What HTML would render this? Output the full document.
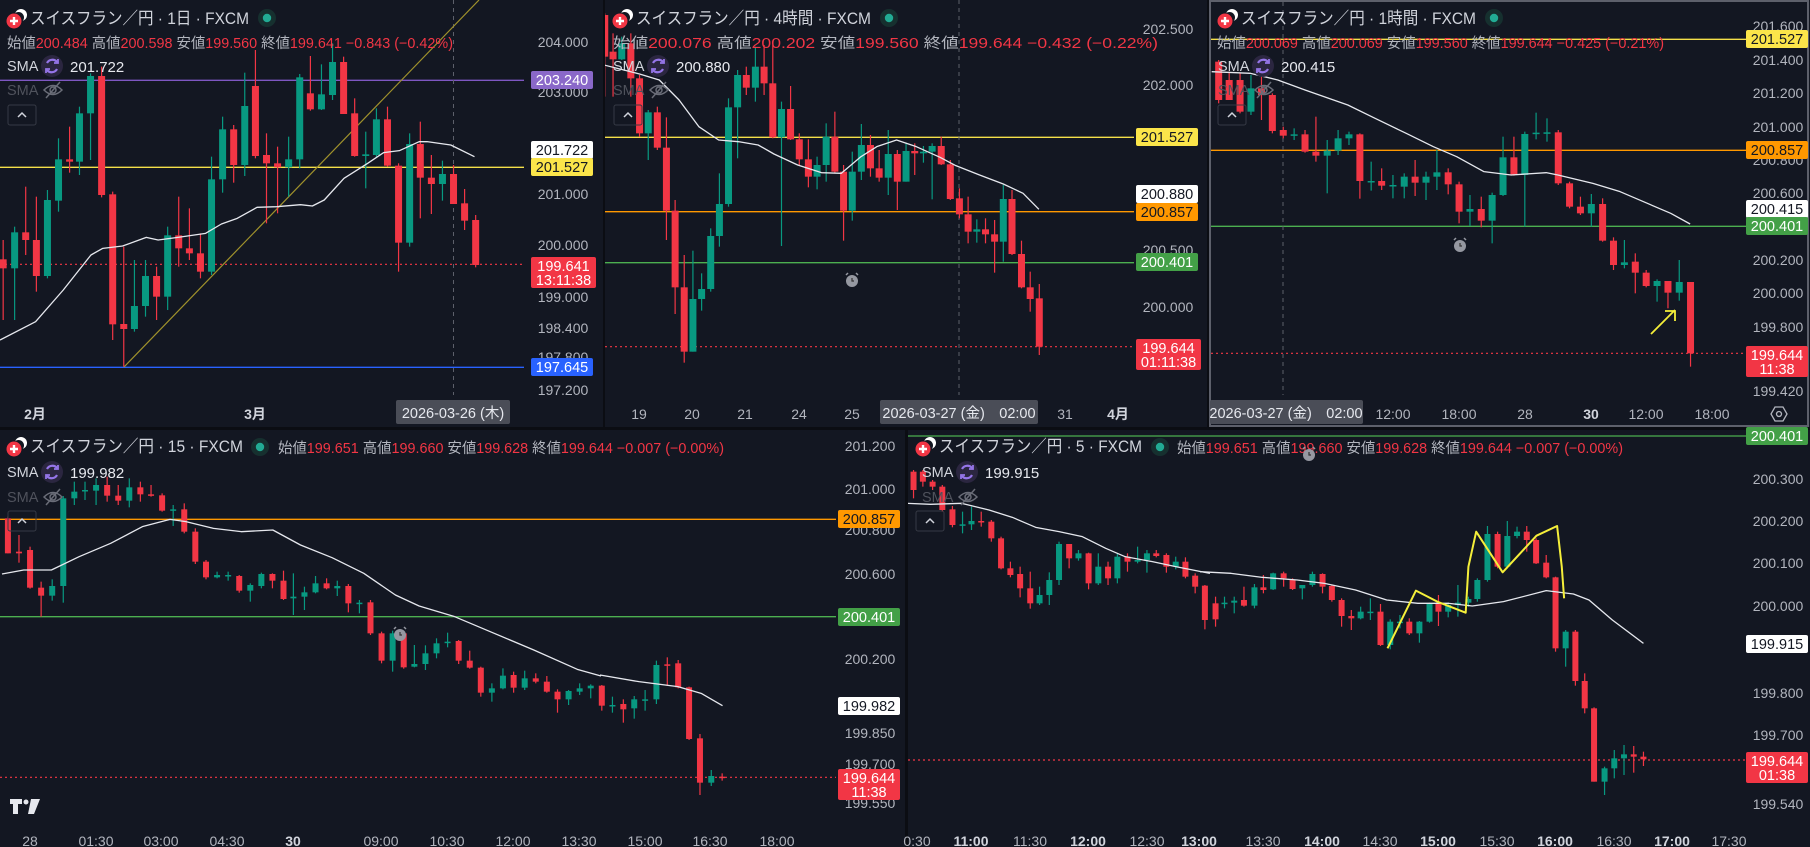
<!DOCTYPE html>
<html><head><meta charset="utf-8">
<style>
html,body{margin:0;padding:0;background:#0b0d13;width:1810px;height:847px;overflow:hidden}
svg{display:block}
text{font-family:"Liberation Sans","Noto Sans CJK JP",sans-serif}
.t{fill:#d1d4dc;font-size:17px}
.o{font-size:14.5px;fill:#b2b5be}
.r{fill:#f23645}
.ax{fill:#b2b5be;font-size:14px;text-anchor:middle}
.bd{fill:#d1d4dc;font-weight:bold}
.lb{font-size:14.5px;text-anchor:middle}
</style></head><body>
<svg id="s" xmlns="http://www.w3.org/2000/svg" width="1810" height="847" viewBox="0 0 1810 847">
<defs>
<clipPath id="c1"><rect x="0" y="0" width="524" height="395"/></clipPath>
<clipPath id="c2"><rect x="605" y="0" width="529" height="395"/></clipPath>
<clipPath id="c3"><rect x="1211" y="2" width="535" height="393"/></clipPath>
<clipPath id="c4"><rect x="0" y="430" width="836" height="398"/></clipPath>
<clipPath id="c5"><rect x="908" y="430" width="838" height="398"/></clipPath>
<g id="logo"><circle cx="7" cy="-6" r="6" fill="#fff"/><circle cx="4.5" cy="-3.5" r="5.5" fill="#131722"/><circle cx="0" cy="0" r="7.5" fill="#f23645"/><path d="M-4 0H4M0 -4V4" stroke="#fff" stroke-width="2.4"/></g>
<g id="dot"><circle r="9" fill="#16302f"/><circle r="4.2" fill="#22ab94"/></g>
<g id="smai"><circle r="11" fill="#2b2640"/><path d="M-5 -3a6 6 0 0 1 10 -1M5 3a6 6 0 0 1 -10 1" stroke="#9575e8" stroke-width="2.2" fill="none"/><path d="M6 -7v4h-4M-6 7v-4h4" stroke="#9575e8" stroke-width="1.8" fill="none"/></g>
<g id="eye"><path d="M-9 0q9 -9 18 0q-9 9 -18 0z" stroke="#6a6d78" stroke-width="1.5" fill="none"/><circle r="3" stroke="#6a6d78" stroke-width="1.5" fill="none"/><path d="M-7 8L7 -8" stroke="#6a6d78" stroke-width="1.5"/></g>
<g id="btn"><rect x="0" y="0" width="28" height="20" rx="2" fill="none" stroke="#363a45"/><path d="M10 12l4 -4l4 4" stroke="#d1d4dc" stroke-width="1.5" fill="none"/></g>
<g id="alarm"><circle r="6" fill="#9598a1"/><path d="M0 -3v3h2" stroke="#333" stroke-width="1.2" fill="none"/><path d="M-6 -6l2 -2M6 -6l-2 -2" stroke="#9598a1" stroke-width="1.5"/></g>
</defs>
<rect x="0" y="0" width="603" height="427" fill="#131722"/>
<rect x="605" y="0" width="602" height="427" fill="#131722"/>
<rect x="1209" y="0" width="601" height="427" fill="#131722"/>
<rect x="0" y="430" width="905" height="417" fill="#131722"/>
<rect x="908" y="430" width="902" height="417" fill="#131722"/>
<rect x="1210" y="1" width="598" height="425" fill="none" stroke="#5d606b" stroke-width="2"/>

<g id="g1" clip-path="url(#c1)"></g>
<g id="g2" clip-path="url(#c2)"></g>
<g id="g3" clip-path="url(#c3)"></g>
<g id="g4" clip-path="url(#c4)"></g>
<g id="g5" clip-path="url(#c5)"></g>

<use href="#logo" x="14" y="21"/>
<text class="t" x="30" y="24" textLength="219" lengthAdjust="spacingAndGlyphs">スイスフラン／円 · 1日 · FXCM</text>
<use href="#dot" x="267" y="18"/>
<text class="o" x="7" y="48" textLength="446" lengthAdjust="spacingAndGlyphs">始値<tspan class="r">200.484</tspan> 高値<tspan class="r">200.598</tspan> 安値<tspan class="r">199.560</tspan> 終値<tspan class="r">199.641 −0.843 (−0.42%)</tspan></text>
<text x="7" y="71" fill="#d1d4dc" font-size="14.5">SMA</text><use href="#smai" x="52" y="66"/><text x="70" y="72" fill="#e6e8ee" font-size="15">201.722</text>
<text x="7" y="95" fill="#4f525c" font-size="14.5">SMA</text><use href="#eye" x="53" y="90"/>
<use href="#btn" x="8" y="105"/>

<use href="#logo" x="620" y="21"/>
<text class="t" x="636" y="24" textLength="235" lengthAdjust="spacingAndGlyphs">スイスフラン／円 · 4時間 · FXCM</text>
<use href="#dot" x="889" y="18"/>
<text class="o" x="613" y="48" textLength="545" lengthAdjust="spacingAndGlyphs">始値<tspan class="r">200.076</tspan> 高値<tspan class="r">200.202</tspan> 安値<tspan class="r">199.560</tspan> 終値<tspan class="r">199.644 −0.432 (−0.22%)</tspan></text>
<text x="613" y="71" fill="#d1d4dc" font-size="14.5">SMA</text><use href="#smai" x="658" y="66"/><text x="676" y="72" fill="#e6e8ee" font-size="15">200.880</text>
<text x="613" y="95" fill="#4f525c" font-size="14.5">SMA</text><use href="#eye" x="659" y="90"/>
<use href="#btn" x="614" y="105"/>

<use href="#logo" x="1225" y="21"/>
<text class="t" x="1241" y="24" textLength="235" lengthAdjust="spacingAndGlyphs">スイスフラン／円 · 1時間 · FXCM</text>
<use href="#dot" x="1494" y="18"/>
<text class="o" x="1217" y="48" textLength="447" lengthAdjust="spacingAndGlyphs">始値<tspan class="r">200.069</tspan> 高値<tspan class="r">200.069</tspan> 安値<tspan class="r">199.560</tspan> 終値<tspan class="r">199.644 −0.425 (−0.21%)</tspan></text>
<text x="1218" y="71" fill="#d1d4dc" font-size="14.5">SMA</text><use href="#smai" x="1263" y="66"/><text x="1281" y="72" fill="#e6e8ee" font-size="15">200.415</text>
<text x="1218" y="95" fill="#4f525c" font-size="14.5">SMA</text><use href="#eye" x="1264" y="90"/>
<use href="#btn" x="1218" y="105"/>

<use href="#logo" x="14" y="449"/>
<text class="t" x="30" y="452" textLength="213" lengthAdjust="spacingAndGlyphs">スイスフラン／円 · 15 · FXCM</text>
<use href="#dot" x="260" y="447"/>
<text class="o" x="278" y="453" textLength="446" lengthAdjust="spacingAndGlyphs">始値<tspan class="r">199.651</tspan> 高値<tspan class="r">199.660</tspan> 安値<tspan class="r">199.628</tspan> 終値<tspan class="r">199.644 −0.007 (−0.00%)</tspan></text>
<text x="7" y="477" fill="#d1d4dc" font-size="14.5">SMA</text><use href="#smai" x="52" y="472"/><text x="70" y="478" fill="#e6e8ee" font-size="15">199.982</text>
<text x="7" y="502" fill="#4f525c" font-size="14.5">SMA</text><use href="#eye" x="53" y="497"/>
<use href="#btn" x="8" y="511"/>
<g fill="#e6e8ee"><path d="M10 799h12v5h-4v10h-5v-10h-3z"/><circle cx="26" cy="802" r="2.5"/><path d="M31 799h9l-6 15h-6z"/></g>

<use href="#logo" x="923" y="449"/>
<text class="t" x="939" y="452" textLength="203" lengthAdjust="spacingAndGlyphs">スイスフラン／円 · 5 · FXCM</text>
<use href="#dot" x="1160" y="447"/>
<text class="o" x="1177" y="453" textLength="446" lengthAdjust="spacingAndGlyphs">始値<tspan class="r">199.651</tspan> 高値<tspan class="r">199.660</tspan> 安値<tspan class="r">199.628</tspan> 終値<tspan class="r">199.644 −0.007 (−0.00%)</tspan></text>
<text x="922" y="477" fill="#d1d4dc" font-size="14.5">SMA</text><use href="#smai" x="967" y="472"/><text x="985" y="478" fill="#e6e8ee" font-size="15">199.915</text>
<text x="922" y="502" fill="#4f525c" font-size="14.5">SMA</text><use href="#eye" x="968" y="497"/>
<use href="#btn" x="916" y="511"/>

<use href="#alarm" x="852" y="281"/>
<use href="#alarm" x="1460" y="246"/>
<use href="#alarm" x="400" y="635"/>
<use href="#alarm" x="1309" y="455"/>
<path d="M1651 334L1675 310M1665 311h10v10" stroke="#f5ef3a" stroke-width="1.8" fill="none"/>

<g class="ax">
<text x="563" y="47">204.000</text><text x="563" y="97">203.000</text><text x="563" y="199">201.000</text><text x="563" y="250">200.000</text><text x="563" y="302">199.000</text><text x="563" y="333">198.400</text><text x="563" y="362">197.800</text><text x="563" y="395">197.200</text>
<text x="35" y="419" class="bd">2月</text><text x="255" y="419" class="bd">3月</text>
</g>
<g class="ax">
<text x="1168" y="34">202.500</text><text x="1168" y="90">202.000</text><text x="1168" y="255">200.500</text><text x="1168" y="312">200.000</text>
<text x="639" y="419">19</text><text x="692" y="419">20</text><text x="745" y="419">21</text><text x="799" y="419">24</text><text x="852" y="419">25</text><text x="1065" y="419">31</text><text x="1118" y="419" class="bd">4月</text>
</g>
<g class="ax">
<text x="1778" y="31">201.600</text><text x="1778" y="65">201.400</text><text x="1778" y="98">201.200</text><text x="1778" y="132">201.000</text><text x="1778" y="165">200.800</text><text x="1778" y="198">200.600</text><text x="1778" y="265">200.200</text><text x="1778" y="298">200.000</text><text x="1778" y="332">199.800</text><text x="1778" y="396">199.420</text>
<text x="1393" y="419">12:00</text><text x="1459" y="419">18:00</text><text x="1525" y="419">28</text><text x="1591" y="419" class="bd">30</text><text x="1646" y="419">12:00</text><text x="1712" y="419">18:00</text>
</g>
<g transform="translate(1779,414)"><path d="M-4 -7h8l4 7l-4 7h-8l-4 -7z" fill="none" stroke="#b2b5be" stroke-width="1.3"/><circle r="2.5" fill="none" stroke="#b2b5be" stroke-width="1.3"/></g>
<g class="ax">
<text x="870" y="451">201.200</text><text x="870" y="494">201.000</text><text x="870" y="535">200.800</text><text x="870" y="579">200.600</text><text x="870" y="664">200.200</text><text x="870" y="738">199.850</text><text x="870" y="769">199.700</text><text x="870" y="808">199.550</text>
<text x="30" y="846">28</text><text x="96" y="846">01:30</text><text x="161" y="846">03:00</text><text x="227" y="846">04:30</text><text x="293" y="846" class="bd">30</text><text x="381" y="846">09:00</text><text x="447" y="846">10:30</text><text x="513" y="846">12:00</text><text x="579" y="846">13:30</text><text x="645" y="846">15:00</text><text x="710" y="846">16:30</text><text x="777" y="846">18:00</text>
</g>
<g class="ax">
<text x="1778" y="484">200.300</text><text x="1778" y="526">200.200</text><text x="1778" y="568">200.100</text><text x="1778" y="611">200.000</text><text x="1778" y="698">199.800</text><text x="1778" y="740">199.700</text><text x="1778" y="809">199.540</text>
<text x="917" y="846">0:30</text><text x="971" y="846" class="bd">11:00</text><text x="1030" y="846">11:30</text><text x="1088" y="846" class="bd">12:00</text><text x="1147" y="846">12:30</text><text x="1199" y="846" class="bd">13:00</text><text x="1263" y="846">13:30</text><text x="1322" y="846" class="bd">14:00</text><text x="1380" y="846">14:30</text><text x="1438" y="846" class="bd">15:00</text><text x="1497" y="846">15:30</text><text x="1555" y="846" class="bd">16:00</text><text x="1614" y="846">16:30</text><text x="1672" y="846" class="bd">17:00</text><text x="1729" y="846">17:30</text>
</g>
<g id="labels"></g>
<rect x="396" y="400" width="114" height="24" rx="2" fill="#4a4d57"/><text x="453" y="418" fill="#e6e8ee" font-size="14.5" text-anchor="middle">2026-03-26 (木)</text>
<rect x="880" y="400" width="158" height="24" rx="2" fill="#4a4d57"/><text x="959" y="418" fill="#e6e8ee" font-size="14.5" text-anchor="middle">2026-03-27 (金)　02:00</text>
<rect x="1210" y="400" width="153" height="24" rx="2" fill="#4a4d57"/><text x="1286" y="418" fill="#e6e8ee" font-size="14.5" text-anchor="middle">2026-03-27 (金)　02:00</text>
</svg>
<script>
const NS='http://www.w3.org/2000/svg';
function el(t,a,p){const e=document.createElementNS(NS,t);for(const k in a)e.setAttribute(k,a[k]);(p||document.getElementById('s')).appendChild(e);return e;}
const R='#f23645',G='#089981';
function hline(g,x1,x2,y,c,dash){el('line',{x1,x2,y1:y,y2:y,stroke:c,'stroke-width':dash?1.2:1.3,'stroke-dasharray':dash||''},g);}
function vline(g,x,y1,y2){el('line',{x1:x,x2:x,y1,y2,stroke:'#5d606b','stroke-dasharray':'4 4','stroke-width':1},g);}
function cand(g,ox,oy,sx,arr,bw){arr.forEach(([x,o,c,h,l])=>{const X=ox+x*sx,col=c>o?R:G;
el('line',{x1:X,x2:X,y1:oy+Math.min(h,o,c)/3,y2:oy+Math.max(l,o,c)/3,stroke:col,'stroke-width':1.2},g);
const t=oy+Math.min(o,c)/3,hh=Math.max(1.5,Math.abs(c-o)/3);el('rect',{x:X-bw/2,y:t,width:bw,height:hh,fill:col},g);});}
function poly(g,ox,oy,sx,pts,col,w){el('polyline',{points:pts.map(p=>(ox+p[0]*sx)+','+(oy+p[1]/3)).join(' '),fill:'none',stroke:col,'stroke-width':w||1.3,'stroke-linejoin':'round'},g);}
function box(x,w,y,fill,tc,txt,t2){const L=document.getElementById('labels');const h=t2?31:18;const top=t2?y:y-9;
el('rect',{x,y:top,width:w,height:h,rx:2,fill},L);const tx=el('text',{x:x+w/2,y:top+14,class:'lb',fill:tc},L);tx.textContent=txt;
if(t2){const t=el('text',{x:x+w/2,y:top+28,class:'lb',fill:tc},L);t.textContent=t2;}}
const g1=document.getElementById('g1'),g2=document.getElementById('g2'),g3=document.getElementById('g3'),g4=document.getElementById('g4'),g5=document.getElementById('g5');
hline(g1,0,524,80.3,'#7e57c2');hline(g1,0,524,167.3,'#f5e04a');hline(g1,0,524,367.3,'#2962ff');hline(g1,0,524,264.3,R,'2 3');vline(g1,453.5,0,395);
el('line',{x1:124,y1:367,x2:479,y2:0,stroke:'#a0922c','stroke-width':1.2},g1);
cand(g1,0,0,0.3954,[[8,778,805,720,960],[37,805,697,680,960],[65,697,720,560,765],[92,720,828,590,875],[120,828,600,570,835],[148,602,478,415,635],[176,478,485,380,518],[201,485,340,320,525],[229,340,228,220,480],[257,228,585,200,592],[285,583,973,575,1020],[313,972,987,740,1100],[340,987,918,780,995],[368,918,828,780,950],[396,828,890,800,960],[424,890,706,680,930],[452,706,745,590,800],[479,745,760,625,780],[507,760,815,700,835],[535,815,538,470,825],[563,538,388,350,578],[591,388,495,375,548],[619,495,318,218,528],[646,258,468,150,475],[674,465,490,400,670],[702,490,502,440,640],[730,502,478,410,590],[758,478,232,222,505],[785,280,328,168,332],[813,328,283,193,330],[841,285,186,130,300],[869,186,342,170,342],[897,340,468,295,470],[925,468,463,395,565],[952,465,358,325,470],[980,358,497,320,500],[1008,497,728,490,815],[1036,728,432,400,740],[1063,432,533,365,655],[1091,533,552,465,642],[1119,552,522,482,602],[1147,522,612,495,612],[1175,610,662,567,690],[1203,660,795,645,802]],7);
poly(g1,0,0,0.3954,[[0,1020],[90,965],[160,870],[230,765],[260,745],[310,738],[370,712],[400,720],[450,712],[520,700],[560,672],[600,655],[650,622],[700,620],[760,614],[790,618],[820,600],[870,535],[930,490],[970,458],[1010,452],[1060,425],[1080,425],[1140,435],[1200,470]],'#e6e8ee');
box(531,62,80,'#8a68c9','#fff','203.240');box(531,62,150,'#ffffff','#131722','201.722');box(531,62,167,'#fbe54a','#131722','201.527');box(531,65,257,R,'#fff','199.641','13:11:38');box(531,62,367,'#2962ff','#fff','197.645');
hline(g2,605,1134,137.3,'#f5e04a');hline(g2,605,1134,211.7,'#ff9800');hline(g2,605,1134,262.7,'#4caf50');hline(g2,605,1134,346.7,R,'2 3');vline(g2,959,0,395);
cand(g2,600,0,0.3954,[[12,45,170,40,290],[33,155,178,100,290],[55,178,130,110,180],[78,130,235,100,290],[100,235,400,225,410],[122,400,337,330,480],[145,337,443,320,450],[168,443,632,352,720],[190,632,862,600,942],[213,862,1055,765,1088],[235,1055,897,752,1055],[257,897,867,820,932],[280,867,708,685,875],[302,708,612,520,740],[325,612,322,295,620],[348,322,225,210,475],[370,225,263,200,285],[393,263,200,140,305],[415,200,250,135,285],[437,250,412,135,415],[459,412,327,305,738],[482,327,418,258,420],[504,418,478,400,495],[527,478,530,418,562],[549,530,495,470,568],[572,495,410,370,545],[594,410,515,335,520],[616,515,632,495,722],[638,632,515,455,662],[661,515,435,372,540],[684,435,505,405,530],[706,505,533,450,545],[729,533,462,390,585],[752,462,545,450,630],[774,545,453,428,545],[796,453,460,430,525],[818,460,455,438,488],[840,455,438,430,598],[863,438,493,410,495],[886,493,597,480,600],[909,595,643,565,655],[931,643,695,590,730],[953,695,688,658,728],[975,688,703,655,730],[998,703,725,660,818],[1020,725,597,555,785],[1042,597,762,570,765],[1066,762,862,722,865],[1088,862,897,815,935],[1111,895,1040,852,1065]],7);
poly(g2,600,0,0.3954,[[10,195],[100,222],[150,240],[200,300],[250,380],[300,420],[350,425],[400,435],[440,462],[500,495],[560,518],[610,520],[660,470],[700,440],[750,420],[800,440],[860,472],[900,497],[960,525],[1020,552],[1070,580],[1110,628]],'#e6e8ee');
box(1136,62,137,'#fbe54a','#131722','201.527');box(1136,62,194,'#ffffff','#131722','200.880');box(1136,62,212,'#ff9800','#131722','200.857');box(1136,62,262,'#43a047','#fff','200.401');box(1136,65,339,R,'#fff','199.644','01:11:38');
hline(g3,1211,1746,39.3,'#f5e04a');hline(g3,1211,1746,150.3,'#ff9800');hline(g3,1211,1746,226.3,'#4caf50');hline(g3,1211,1746,353.3,R,'2 3');vline(g3,1283,2,395);
cand(g3,1200,0,0.389,[[48,185,300,180,310],[75,240,300,215,300],[103,240,335,220,340],[131,335,265,225,345],[158,265,285,225,360],[186,285,393,280,400],[214,390,407,380,415],[242,403,403,385,420],[270,403,455,390,458],[298,455,467,350,485],[327,467,452,420,580],[355,452,415,390,465],[383,415,403,395,435],[411,403,543,400,596],[440,543,543,485,572],[467,543,557,505,570],[496,557,555,525,595],[525,560,530,520,595],[553,530,548,480,588],[581,548,530,515,600],[609,530,517,450,570],[638,517,553,505,583],[666,553,635,545,670],[694,635,627,585,678],[723,627,662,590,682],[751,662,585,578,730],[779,585,472,410,588],[807,472,525,410,527],[835,525,402,395,680],[864,402,398,338,418],[892,398,397,355,425],[921,397,550,390,555],[950,550,620,545,625],[978,620,640,590,645],[1006,640,612,582,680],[1035,612,722,595,725],[1063,722,795,712,810],[1091,795,787,720,805],[1119,785,818,760,880],[1147,818,858,810,862],[1175,858,843,838,905],[1203,843,878,843,925],[1232,878,846,780,902],[1261,846,1060,846,1100]],7);
poly(g3,1200,0,0.389,[[30,215],[130,220],[200,240],[270,270],[380,315],[450,355],[530,400],[600,440],[660,470],[730,515],[800,525],[890,518],[920,525],[1010,550],[1080,575],[1150,610],[1210,640],[1260,672]],'#e6e8ee');
box(1746,62,39,'#fbe54a','#131722','201.527');box(1746,62,150,'#ff9800','#131722','200.857');box(1746,62,209,'#ffffff','#131722','200.415');box(1746,62,226,'#43a047','#fff','200.401');box(1746,62,346,R,'#fff','199.644','11:38');
hline(g4,0,836,519.3,'#ff9800');hline(g4,0,836,616.7,'#4caf50');hline(g4,0,836,777.3,R,'2 3');
cand(g4,0,420,0.3954,[[20,295,400,290,400],[48,395,400,345,428],[76,390,503,380,506],[104,503,527,485,590],[132,527,498,478,542],[160,498,235,228,548],[188,235,215,185,255],[215,212,210,185,240],[243,212,195,175,255],[271,195,227,170,245],[299,227,242,195,255],[327,242,202,175,262],[355,202,223,185,245],[382,223,226,195,230],[410,226,272,220,275],[438,272,268,255,318],[466,268,335,250,340],[494,335,425,325,432],[521,425,472,420,478],[549,472,465,455,475],[577,465,465,455,482],[605,468,512,465,518],[633,512,495,490,545],[661,498,462,458,505],[689,462,482,460,505],[717,482,537,452,540],[742,535,530,460,585],[770,530,517,500,570],[798,517,490,468,520],[826,490,505,475,508],[853,505,498,482,528],[881,498,550,492,577],[909,550,548,540,580],[937,547,640,540,645],[965,640,722,635,730],[993,722,640,632,755],[1021,640,742,635,746],[1048,740,732,675,742],[1076,732,700,676,750],[1104,700,670,655,715],[1132,667,665,638,682],[1160,663,722,660,732],[1188,722,743,692,746],[1216,743,818,740,830],[1244,818,805,790,845],[1272,805,767,745,808],[1299,765,803,755,818],[1327,803,775,752,810],[1355,775,785,760,790],[1383,785,815,768,818],[1410,815,838,808,878],[1438,838,813,810,855],[1466,815,805,790,825],[1494,805,797,793,835],[1522,797,857,795,872]],6);
cand(g4,600,420,0.389,[[32,855,855,830,878],[60,852,868,838,908],[88,865,838,828,896],[116,838,838,810,872],[145,838,735,722,852],[173,733,735,712,798],[201,730,802,720,805],[229,802,957,800,960],[257,955,1088,942,1125],[286,1088,1068,1050,1098],[314,1070,1072,1060,1082]],6);
poly(g4,0,420,0.3954,[[5,462],[60,450],[130,450],[200,410],[280,370],[360,320],[430,298],[470,305],[540,325],[610,335],[690,330],[760,375],[840,413],[920,460],[1000,525],[1060,558],[1150,590],[1240,635],[1350,690],[1460,748],[1520,768]],'#e6e8ee');
poly(g4,600,420,0.389,[[0,765],[100,785],[200,800],[260,820],[315,857]],'#e6e8ee');
box(838,62,519,'#ff9800','#131722','200.857');box(838,62,617,'#43a047','#fff','200.401');box(838,62,706,'#ffffff','#131722','199.982');box(838,62,769,R,'#fff','199.644','11:38');
hline(g5,908,1746,436,'#4caf50');hline(g5,908,1746,760,R,'2 3');
cand(g5,600,420,0.389,[[806,155,210,150,235],[830,155,185,150,200],[855,185,200,180,210],[880,200,270,195,275],[906,268,315,258,322],[932,313,313,275,340],[955,313,303,260,330],[980,303,305,275,320],[1006,305,355,300,365],[1031,355,445,350,448],[1055,445,465,425,472],[1080,462,505,440,532],[1106,505,550,455,566],[1130,550,525,500,555],[1155,525,480,457,555],[1180,480,372,365,495],[1206,372,415,372,445],[1230,415,400,390,422],[1256,400,490,398,508],[1281,490,440,400,495],[1306,440,475,425,495],[1330,475,410,400,490],[1356,410,425,400,455],[1382,425,420,380,430],[1406,420,400,390,458],[1430,400,408,390,412],[1456,405,440,400,458],[1480,440,425,410,448],[1505,425,470,412,475],[1530,467,500,460,520],[1555,497,600,495,628]],6);
cand(g5,1200,420,0.389,[[40,550,598,530,620],[63,548,548,530,565],[88,548,542,530,580],[113,540,557,500,560],[140,557,502,492,565],[163,502,510,465,520],[188,508,460,458,510],[215,460,475,455,500],[238,480,507,475,510],[263,505,495,495,538],[289,495,462,455,500],[315,462,500,460,520],[339,498,540,495,545],[364,540,588,535,620],[389,588,595,570,630],[413,595,575,560,598],[438,575,575,535,600],[464,575,675,552,678],[489,675,605,598,688],[514,605,605,585,625],[538,605,640,595,645],[564,640,605,603,668],[590,605,550,548,608],[613,548,575,525,618],[638,575,555,548,592],[663,555,548,495,590],[690,548,537,530,560],[713,537,480,475,545],[739,480,342,318,485],[765,342,440,335,445],[790,440,348,303,445],[815,348,335,320,355],[840,335,360,318,395],[864,360,430,355,432],[890,428,472,405,475],[914,472,685,470,695],[940,685,635,630,740],[965,635,783,630,797],[989,783,865,760,880],[1013,865,1085,862,1085],[1040,1085,1045,1040,1125],[1065,1045,1015,990,1075],[1090,1015,1003,975,1065],[1115,1003,1010,978,1058],[1140,1010,1018,995,1038]],6);
poly(g5,600,420,0.389,[[790,250],[850,253],[930,250],[1000,270],[1060,292],[1120,322],[1180,335],[1240,350],[1300,385],[1350,410],[1420,425],[1480,440],[1568,460]],'#e6e8ee');
poly(g5,1200,420,0.389,[[0,455],[80,460],[160,472],[250,480],[320,490],[400,510],[480,540],[560,550],[640,550],[700,558],[780,545],[890,512],[960,522],[1000,540],[1060,600],[1140,670]],'#e6e8ee');
poly(g5,1200,420,0.389,[[482,685],[555,512],[610,545],[683,578],[690,440],[710,335],[778,457],[865,347],[918,318],[930,440],[936,535]],'#f5ef3a',2);
box(1746,62,436,'#43a047','#fff','200.401');box(1746,62,644,'#ffffff','#131722','199.915');box(1746,62,752,R,'#fff','199.644','01:38');
</script>
</body></html>
